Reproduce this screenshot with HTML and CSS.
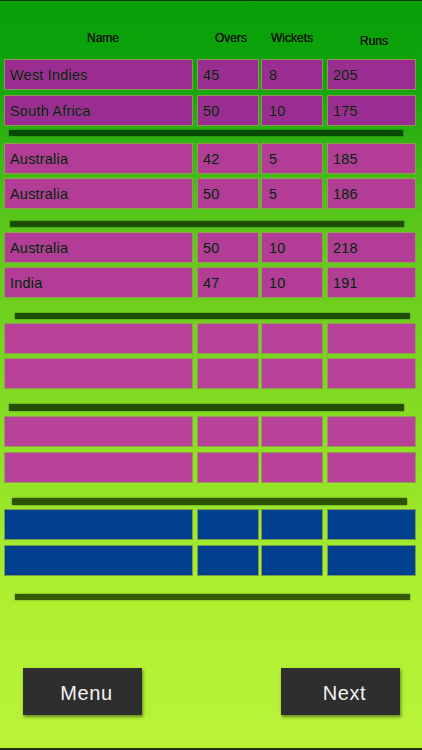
FILE: index.html
```html
<!DOCTYPE html>
<html>
<head>
<meta charset="utf-8">
<link rel="stylesheet" href="styles.css">
</head>
<body>
<div class="screen">
  <div class="header">
    <span class="h h-name">Name</span>
    <span class="h h-overs">Overs</span>
    <span class="h h-wk">Wickets</span>
    <span class="h h-runs">Runs</span>
  </div>

  <div class="group g1">
    <div class="row purple"><div class="c c1">West Indies</div><div class="c c2">45</div><div class="c c3">8</div><div class="c c4">205</div></div>
    <div class="row purple"><div class="c c1">South Africa</div><div class="c c2">50</div><div class="c c3">10</div><div class="c c4">175</div></div>
    <div class="bar b1"></div>
  </div>

  <div class="group g2">
    <div class="row pink"><div class="c c1">Australia</div><div class="c c2">42</div><div class="c c3">5</div><div class="c c4">185</div></div>
    <div class="row pink"><div class="c c1">Australia</div><div class="c c2">50</div><div class="c c3">5</div><div class="c c4">186</div></div>
    <div class="bar b2"></div>
  </div>

  <div class="group g3">
    <div class="row pink"><div class="c c1">Australia</div><div class="c c2">50</div><div class="c c3">10</div><div class="c c4">218</div></div>
    <div class="row pink"><div class="c c1">India</div><div class="c c2">47</div><div class="c c3">10</div><div class="c c4">191</div></div>
    <div class="bar b3"></div>
  </div>

  <div class="group g4">
    <div class="row pink"><div class="c c1"></div><div class="c c2"></div><div class="c c3"></div><div class="c c4"></div></div>
    <div class="row pink"><div class="c c1"></div><div class="c c2"></div><div class="c c3"></div><div class="c c4"></div></div>
    <div class="bar b4"></div>
  </div>

  <div class="group g5">
    <div class="row pink"><div class="c c1"></div><div class="c c2"></div><div class="c c3"></div><div class="c c4"></div></div>
    <div class="row pink"><div class="c c1"></div><div class="c c2"></div><div class="c c3"></div><div class="c c4"></div></div>
    <div class="bar b5"></div>
  </div>

  <div class="group g6">
    <div class="row blue"><div class="c c1"></div><div class="c c2"></div><div class="c c3"></div><div class="c c4"></div></div>
    <div class="row blue"><div class="c c1"></div><div class="c c2"></div><div class="c c3"></div><div class="c c4"></div></div>
    <div class="bar b6"></div>
  </div>

  <div class="buttons">
    <div class="btn">Menu</div>
    <div class="btn">Next</div>
  </div>
</div>
</body>
</html>
```

FILE: styles.css
```css
html, body {
  margin: 0;
  padding: 0;
}
body {
  width: 422px;
  height: 750px;
  overflow: hidden;
  font-family: "Liberation Sans", Arial, sans-serif;
}
.screen {
  box-sizing: border-box;
  width: 422px;
  height: 750px;
  border-top: 1px solid #0b3a0b;
  border-bottom: 2px solid #233010;
  background: linear-gradient(180deg, #06a006 0%, #10a40c 10%, #5cc71a 30%, #85dc22 55%, #aef030 80%, #b9f338 100%);
  display: flex;
  flex-direction: column;
}
.header {
  height: 58px;
  position: relative;
  font-size: 12px;
  color: #0a140a;
  text-shadow: 0 0 0.6px #0a140a;
}
.h {
  position: absolute;
  top: 30px;
}
.h-name { left: 87px; }
.h-overs { left: 215px; }
.h-wk { left: 271px; }
.h-runs { left: 360px; top: 33px; }

.group {
  display: flex;
  flex-direction: column;
}
.row {
  display: flex;
  height: 31px;
  padding-left: 4px;
  margin-top: 4px;
}
.row:first-child { margin-top: 0; }
.c {
  box-sizing: border-box;
  height: 100%;
  border: 1px solid rgba(140, 170, 70, 0.85);
  display: flex;
  align-items: center;
  padding-left: 5px;
  font-size: 14.5px;
  color: #141414;
  text-shadow: 0 0 1px #777;
  letter-spacing: 0.2px;
}
.c1 { width: 189px; }
.c2 { width: 62px; margin-left: 4px; }
.c3 { width: 62px; margin-left: 2px; padding-left: 7px; }
.c4 { width: 89px; margin-left: 4px; }

.purple .c { background: #9a2c92; }
.pink .c { background: #b33c97; }
.g4 .c, .g5 .c { background: #b8419a; }
.blue .c { background: #00408f; }

.bar {
  height: 6px;
  box-shadow: 0 0 2px rgba(0, 40, 0, 0.6);
}
.b1 { margin: 4px 0 0 9px; width: 394px; background: #054a00; }
.b2 { margin: 12px 0 0 10px; width: 394px; background: #1c4d02; }
.b3 { margin: 15px 0 0 15px; width: 395px; background: #214d02; }
.b4 { margin: 15px 0 0 9px; width: 395px; height: 7px; background: #264e02; }
.b5 { margin: 15px 0 0 12px; width: 395px; height: 7px; background: #2d5202; }
.b6 { margin: 18px 0 0 15px; width: 395px; background: #345804; }

.g1 .row + .row { margin-top: 5px; }
.g5 .row + .row, .g6 .row + .row { margin-top: 5px; }

.g1 { margin-top: 0; }
.g2 { margin-top: 7px; }
.g3 { margin-top: 5px; }
.g4 { margin-top: 4px; }
.g5 { margin-top: 5px; }
.g6 { margin-top: 4px; }

.buttons {
  display: flex;
  justify-content: space-between;
  padding: 0 22px 0 23px;
  margin-top: 68px;
}
.btn {
  box-sizing: border-box;
  width: 119px;
  height: 47px;
  padding: 4px 0 0 8px;
  background: #2e2e2e;
  color: #f4f4f4;
  font-size: 20px;
  display: flex;
  align-items: center;
  justify-content: center;
  box-shadow: 1px 2px 3px rgba(0, 0, 0, 0.45);
  letter-spacing: 0.6px;
}
```
